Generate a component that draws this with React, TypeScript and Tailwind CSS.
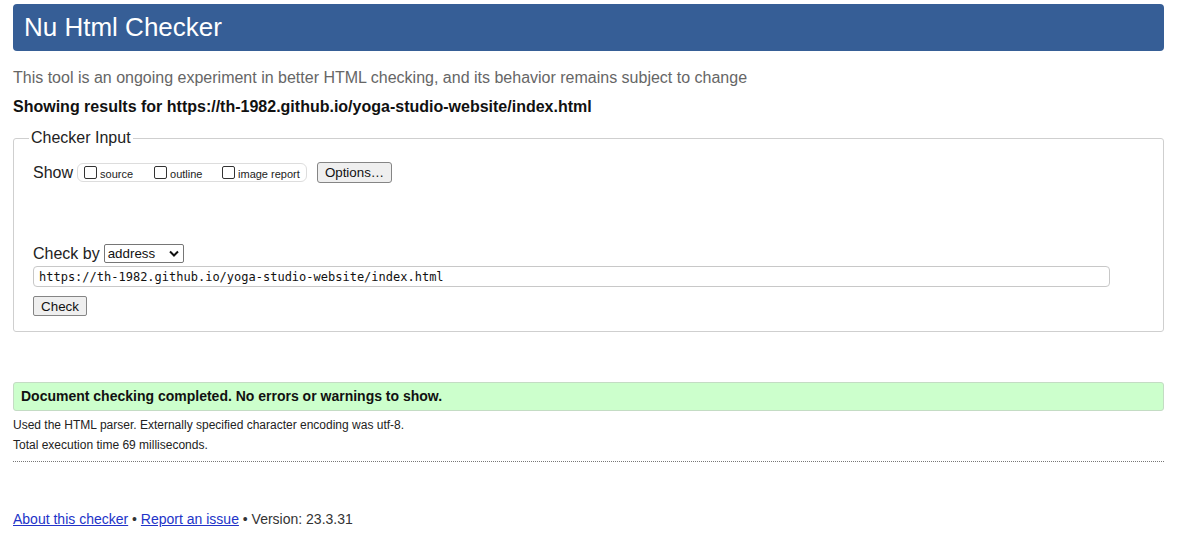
import React from 'react';

const sans = "font-['Liberation_Sans',Arial,sans-serif]";

const Checkbox = ({ label }: { label: string }) => (
  <label className="flex items-center">
    <input
      type="checkbox"
      className="appearance-none w-[13px] h-[13px] border border-[#333] rounded-[2px] bg-white mr-[3px]"
    />
    <span className="text-[11px] text-[#222] mt-[3px]">{label}</span>
  </label>
);

export default function App() {
  return (
    <div className={`${sans} bg-white min-h-[551px] pl-[13px] pr-[18px] pt-[4px] text-[#111]`}>
      {/* Header */}
      <header className="h-[47px] rounded-[4px] bg-[#365e96] flex items-center pl-[11px] pb-[1px]">
        <h1 className="text-[26px] text-white leading-none">Nu Html Checker</h1>
      </header>

      <p className="mt-[18px] text-[16px] leading-[18px] text-[#666]">
        This tool is an ongoing experiment in better HTML checking, and its behavior remains subject to change
      </p>
      <p className="mt-[11px] text-[16px] leading-[18px] font-bold text-[#111]">
        Showing results for https://th-1982.github.io/yoga-studio-website/index.html
      </p>

      {/* Checker Input */}
      <fieldset className="mt-[13px] border border-[#cfcfcf] rounded-[3px] px-[19px] pb-[15px]">
        <legend className="-ml-[4px] px-[2px] text-[16px] leading-[18px] text-[#222]">Checker Input</legend>

        <div className="mt-[15px] flex items-center h-[21px]">
          <span className="text-[16px] text-[#222] mr-[4px]">Show</span>
          <div className="flex items-center h-[19px] w-[230px] border border-[#ddd] rounded-[6px] pl-[6px]">
            <div className="w-[70px]">
              <Checkbox label="source" />
            </div>
            <div className="w-[68px]">
              <Checkbox label="outline" />
            </div>
            <Checkbox label="image report" />
          </div>
          <button className="ml-[10px] h-[21px] w-[75px] bg-[#efefef] border border-[#858585] rounded-[3px] text-[13.33px] text-[#111]">
            Options…
          </button>
        </div>

        <div className="mt-[61px] flex items-center h-[19px]">
          <span className="text-[16px] text-[#222] mr-[4px]">Check by</span>
          <div className="h-[19px] w-[80px] border border-[#767676] rounded-[2px] flex items-center justify-between pl-[3px] pr-[4px] bg-white">
            <span className="text-[13.33px] text-[#111]">address</span>
            <svg width="10" height="7" viewBox="0 0 10 7">
              <path d="M1 1.5 L5 5.5 L9 1.5" fill="none" stroke="#111" strokeWidth="2" />
            </svg>
          </div>
        </div>

        <div className="mt-[3px] h-[21px] w-[1077px] border border-[#c8c8c8] rounded-[4px] flex items-center pl-[5px]">
          <span className="font-['DejaVu_Sans_Mono',monospace] text-[12px] text-[#111]">
            https://th-1982.github.io/yoga-studio-website/index.html
          </span>
        </div>

        <button className="mt-[9px] h-[20px] w-[54px] bg-[#efefef] border border-[#858585] rounded-[2px] text-[13.33px] text-[#111] block">
          Check
        </button>
      </fieldset>

      {/* Result */}
      <div className="mt-[50px] h-[29px] bg-[#ccffcc] border border-[#c4dcc4] rounded-[3px] flex items-center pl-[7px]">
        <span className="text-[14px] font-bold text-[#111]">
          Document checking completed. No errors or warnings to show.
        </span>
      </div>
      <p className="mt-[4px] text-[12px] leading-[20px] text-[#222]">
        Used the HTML parser. Externally specified character encoding was utf-8.
      </p>
      <p className="text-[12px] leading-[20px] text-[#222]">Total execution time 69 milliseconds.</p>
      <div className="mt-[6px] border-t border-dotted border-[#777]" />

      {/* Footer */}
      <p className="mt-[49px] text-[14px] leading-[16px] text-[#333]">
        <a href="#" className="text-[#2233c8] underline">About this checker</a>
        {' • '}
        <a href="#" className="text-[#2233c8] underline">Report an issue</a>
        {' • Version: 23.3.31'}
      </p>
    </div>
  );
}
